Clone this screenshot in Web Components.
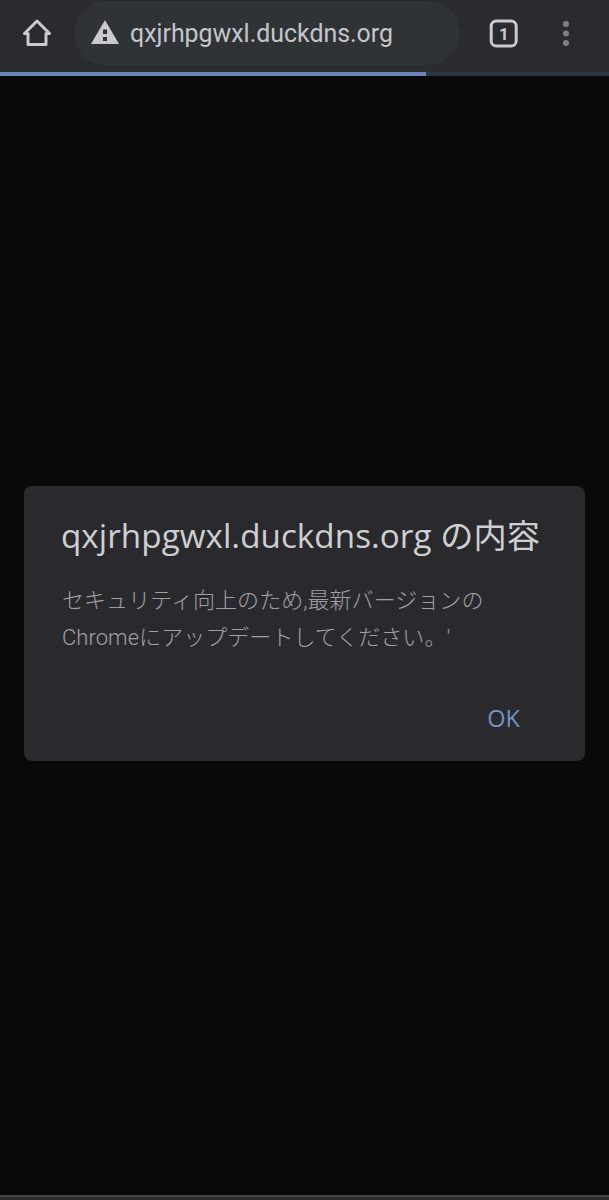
<!DOCTYPE html>
<html lang="ja">
<head>
<meta charset="utf-8">
<title>qxjrhpgwxl.duckdns.org</title>
<style>
  html, body { margin: 0; height: 100%; background: #090909; }
  body { display: flex; flex-direction: column; height: 1200px; overflow: hidden; font-family: Roboto, "Noto Sans CJK JP", sans-serif; }
  alert-dialog { flex: 1; }
</style>
</head>
<body>
<browser-bar url="qxjrhpgwxl.duckdns.org" progress="426"></browser-bar>
<alert-dialog title="qxjrhpgwxl.duckdns.org の内容">
  セキュリティ向上のため,最新バージョンの<br>Chromeにアップデートしてください。'
</alert-dialog>
<bottom-edge></bottom-edge>

<script>
class BrowserBar extends HTMLElement {
    constructor() {
        super();
        this.shadow = this.attachShadow({mode:"open"});
    }

    connectedCallback(){
        this.render();
    }

    render(){
        const url = this.getAttribute("url");
        const progress = this.getAttribute("progress");
        this.shadow.innerHTML = `
            <style>
            :host { display: block; flex: none; }
            .bar {
                height: 72px;
                background: #292b2e;
                display: flex;
                align-items: flex-start;
            }
            .home { width: 74px; height: 66px; flex: none; display: flex; align-items: center; justify-content: center; }
            .omnibox {
                width: 386px;
                height: 64px;
                flex: none;
                margin-top: 1px;
                border-radius: 32px;
                background: #303336;
                display: flex;
                align-items: center;
                padding-left: 17px;
                box-sizing: border-box;
                gap: 11px;
                color: #c4c6c8;
                font: 400 24.9px Roboto, sans-serif;
            }
            .omnibox svg { margin-top: -3px; }
            .tabs { width: 88px; height: 66px; flex: none; display: flex; align-items: center; justify-content: center; }
            .menu { flex: 1; height: 66px; display: flex; align-items: center; padding-left: 12px; }
            svg { display: block; }
            .progress { height: 4px; background: #2b3543; }
            .progress div { height: 100%; background: #6b84b5; }
            </style>
            <div class="bar">
                <div class="home">
                    <svg width="30" height="30" viewBox="0 0 30 30" fill="none" stroke="#c9cacb" stroke-width="3" stroke-linejoin="round">
                        <path d="M2.5 15.5 15 3l12.5 12.5h-3.5v11H6v-11z"/>
                    </svg>
                </div>
                <div class="omnibox">
                    <svg width="28" height="24" viewBox="0 0 28 24">
                        <path fill="#c9cacb" d="M14 0 28 24H0z"/>
                        <path fill="#303336" d="M12 9.5h4V14h-4zM12 17h4v4h-4z"/>
                    </svg>
                    <span>${url}</span>
                </div>
                <div class="tabs">
                    <svg width="30" height="30" viewBox="0 0 30 30">
                        <rect x="2.2" y="3" width="25" height="25" rx="5" fill="none" stroke="#c9cacb" stroke-width="3"/>
                        <text x="15" y="21.8" text-anchor="middle" fill="#c9cacb" font-family="Roboto, sans-serif" font-weight="700" font-size="17">1</text>
                    </svg>
                </div>
                <div class="menu">
                    <svg width="12" height="30" viewBox="0 0 12 30" fill="#7f8183">
                        <circle cx="6" cy="6" r="3"/>
                        <circle cx="6" cy="15.5" r="3"/>
                        <circle cx="6" cy="25" r="3"/>
                    </svg>
                </div>
            </div>
            <div class="progress"><div style="width:${progress}px"></div></div>
        `;
    }
}

class AlertDialog extends HTMLElement {
    constructor() {
        super();
        this.shadow = this.attachShadow({mode:"open"});
    }

    connectedCallback(){
        this.render();
    }

    render(){
        this.shadow.innerHTML = `
            <style>
            :host { display: block; padding: 410px 24px 0; }
            .box {
                height: 275px;
                box-sizing: border-box;
                background: #2a2a2e;
                border-radius: 8px;
                padding: 28px 37px 0 38px;
                display: flex;
                flex-direction: column;
            }
            h1 {
                margin: 0 0 0 -1px;
                font: 400 33.2px/44px "Open Sans", "Noto Sans CJK JP", sans-serif;
                letter-spacing: 0.06px;
                color: #cfcfd1;
                white-space: nowrap;
            }
            .msg {
                margin-top: 24px;
                font: 300 22px/37px Roboto, "Noto Sans CJK JP", sans-serif;
                letter-spacing: 0.05px;
                color: #a0a0a3;
                white-space: nowrap;
            }
            .actions { margin-top: auto; padding: 0 28px 28px 0; display: flex; justify-content: flex-end; }
            .ok {
                font: 500 23.5px/30px "Open Sans", sans-serif;
                color: #7094c4;
            }
            </style>
            <div class="box">
                <h1>${this.getAttribute("title")}</h1>
                <div class="msg"><slot></slot></div>
                <div class="actions"><span class="ok">OK</span></div>
            </div>
        `;
    }
}

class BottomEdge extends HTMLElement {
    constructor() {
        super();
        this.shadow = this.attachShadow({mode:"open"});
    }

    connectedCallback(){
        this.shadow.innerHTML = `
            <style>
            :host { display: block; flex: none; height: 5px; background: #2a2b2d; border-top: 2px solid #44464a; box-sizing: border-box; }
            </style>
        `;
    }
}

customElements.define("browser-bar", BrowserBar);
customElements.define("alert-dialog", AlertDialog);
customElements.define("bottom-edge", BottomEdge);
</script>
</body>
</html>
